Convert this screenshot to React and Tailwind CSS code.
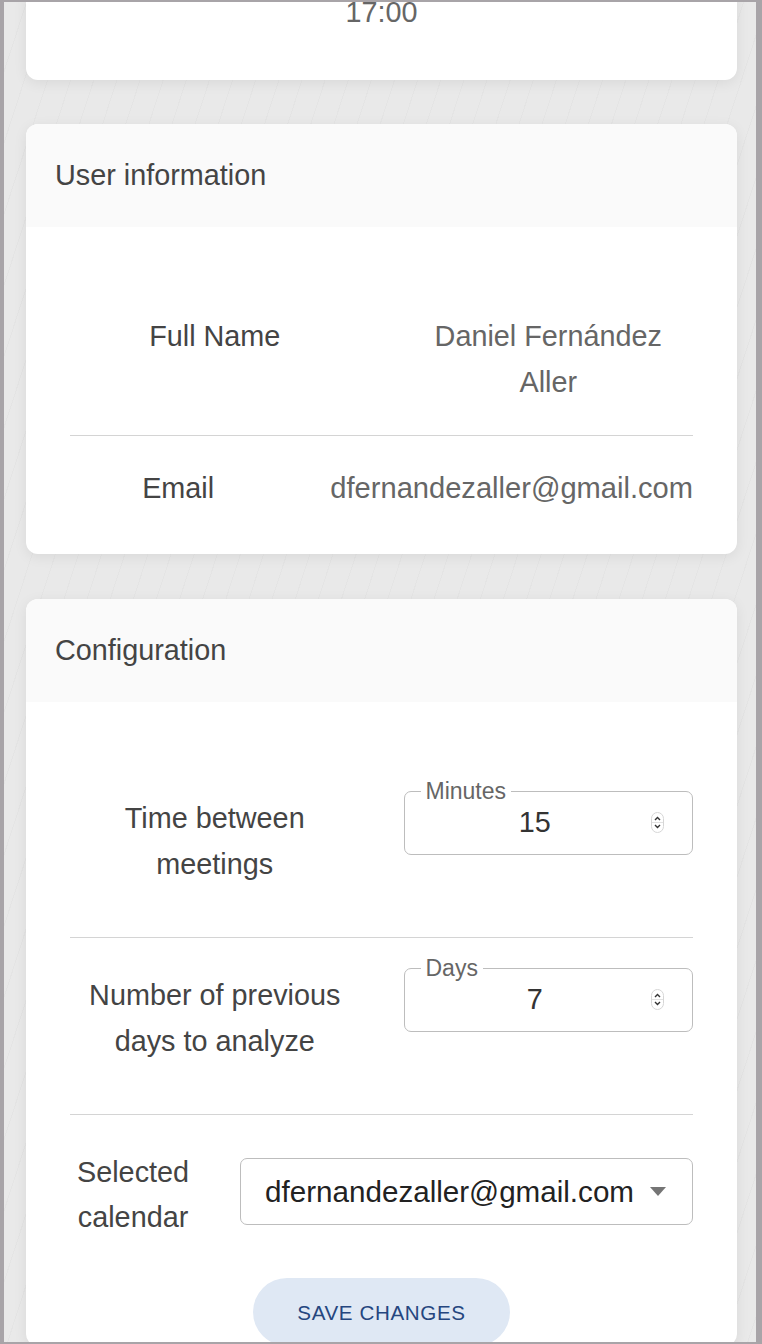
const font = { fontFamily: '"Liberation Sans", Arial, sans-serif' };

const Spinner = () => (
  <svg width="13" height="21" viewBox="0 0 13 21" className="shrink-0">
    <rect x="0.5" y="0.5" width="12" height="20" rx="6" fill="#fff" stroke="#d6d6d6" />
    <line x1="1" y1="10.5" x2="12" y2="10.5" stroke="#e2e2e2" />
    <path d="M4 8 L6.5 5.5 L9 8" fill="none" stroke="#333" strokeWidth="1.4" />
    <path d="M4 13 L6.5 15.5 L9 13" fill="none" stroke="#333" strokeWidth="1.4" />
  </svg>
);

const NumberField = ({ label, value }) => (
  <div className="relative h-[64px] w-full rounded-[7px] border border-[#bdbdbd] bg-white">
    <span className="absolute left-[16px] top-[-14px] bg-white px-[5px] text-[23px] leading-[26px] text-[#666]">
      {label}
    </span>
    <div className="flex h-full items-center pl-[20px] pr-[28px]">
      <span className="flex-1 pr-[6px] text-center text-[28.8px] text-[#333]">{value}</span>
      <Spinner />
    </div>
  </div>
);

const Card = ({ title, children, className = "mb-[44px]" }) => (
  <div className={`${className} overflow-hidden rounded-[12px] bg-white shadow-[0_3px_14px_rgba(0,0,0,0.07)]`}>
    <div className="flex h-[103px] items-center bg-[#fafafa] px-[29px] pt-[1px] text-[28.8px] text-[#444]">
      {title}
    </div>
    {children}
  </div>
);

const InfoRow = ({ label, children, last }) => (
  <div className={`flex items-start gap-[44px] py-[30px] ${last ? "" : "border-b border-[#d4d4d4]"}`}>
    <div className="flex-1 basis-0 text-center text-[#444]">{label}</div>
    <div className="flex-1 basis-0 text-center text-[#666]">{children}</div>
  </div>
);

const ConfigRow = ({ label, children }) => (
  <div className="flex items-center gap-[44px] border-b border-[#d4d4d4] pt-[30px] pb-[44px]">
    <div className="flex-1 basis-0 text-center text-[#444]">{label}</div>
    <div className="flex-1 basis-0 pb-[38px]">{children}</div>
  </div>
);

export default function App() {
  return (
    <div
      style={font}
      className="h-[1344px] overflow-hidden border-t-2 border-b-2 border-l-4 border-r-[6px] border-[#a8a4a8] bg-[#e9e9e9] bg-[repeating-linear-gradient(108deg,transparent_0px,transparent_21px,rgba(0,0,0,0.018)_21px,rgba(0,0,0,0.018)_22px)] pl-[22px] pr-[19px] text-[28.8px] leading-[45.5px]"
    >
      <div className="-mt-[11px] mb-[44px] rounded-b-[12px] bg-white pb-[46px] text-center text-[28.8px] leading-[43px] text-[#666] shadow-[0_3px_14px_rgba(0,0,0,0.07)]">
        17:00
      </div>

      <Card title="User information" className="mb-[45px]">
        <div className="px-[44px] pt-[57px] pb-[12px]">
          <InfoRow label="Full Name">Daniel Fernández Aller</InfoRow>
          <InfoRow label="Email" last>
            <span className="whitespace-nowrap text-[29.1px]">dfernandezaller@gmail.com</span>
          </InfoRow>
        </div>
      </Card>

      <Card title="Configuration">
        <div className="px-[44px] pt-[59px]">
          <ConfigRow label="Time between meetings">
            <NumberField label="Minutes" value="15" />
          </ConfigRow>
          <ConfigRow label="Number of previous days to analyze">
            <NumberField label="Days" value="7" />
          </ConfigRow>
          <div className="flex items-center gap-[44px] pt-[35px] pb-[37px]">
            <div className="flex-1 basis-0 text-center text-[#444]">Selected calendar</div>
            <div className="flex-1 basis-0">
              <div className="-mt-[7px] flex h-[67px] items-center gap-[16px] whitespace-nowrap rounded-[7px] border border-[#bdbdbd] bg-white pl-[24px] pr-[26px] text-[29.6px] text-[#222]">
                <span>dfernandezaller@gmail.com</span>
                <svg width="16" height="9" viewBox="0 0 16 9" className="shrink-0">
                  <path d="M0 0 L16 0 L8 9 Z" fill="#757575" />
                </svg>
              </div>
            </div>
          </div>
          <div className="flex justify-center">
            <button className="h-[68px] rounded-full bg-[#dfe8f4] px-[44px] pt-[2px] text-[20.6px] tracking-[0.03em] text-[#25467f]">
              SAVE CHANGES
            </button>
          </div>
        </div>
      </Card>
    </div>
  );
}
